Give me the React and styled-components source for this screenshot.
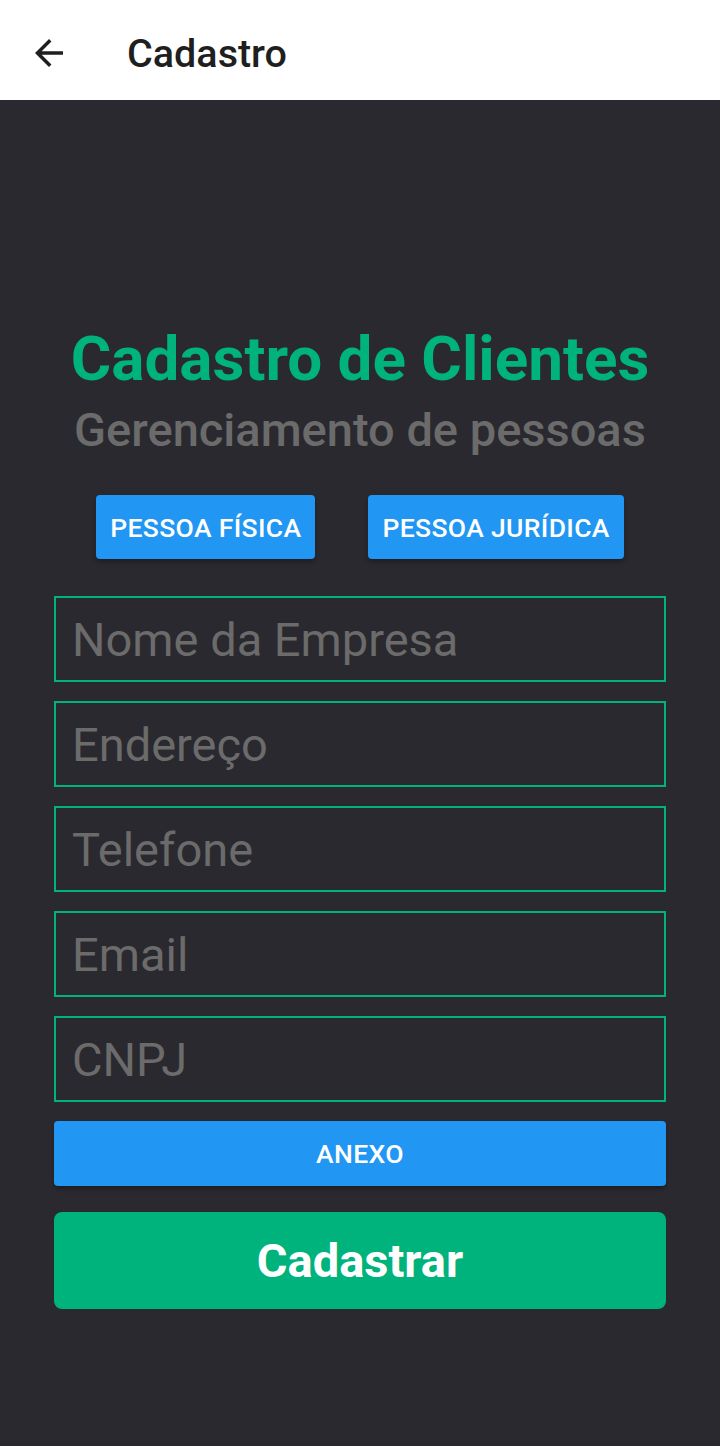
import styled, { createGlobalStyle } from "styled-components";

const GlobalStyle = createGlobalStyle`
    html, body {
        margin: 0;
        padding: 0;
        background-color: #2a292f;
        font-family: Roboto, "Noto Sans", sans-serif;
    }
    * {
        box-sizing: border-box;
    }
`

const fields = ["Nome da Empresa", "Endereço", "Telefone", "Email", "CNPJ"];

const BackIcon = () => (
    <svg width="42" height="42" viewBox="0 0 24 24">
        <path fill="#1f1f1f" d="M20 11H7.83l5.59-5.59L12 4l-8 8 8 8 1.41-1.41L7.83 13H20v-2z" />
    </svg>
);

const App = () => {
    return (
        <Page>
            <GlobalStyle />
            <Header>
                <BackButton aria-label="Voltar"><BackIcon /></BackButton>
                <HeaderTitle>Cadastro</HeaderTitle>
            </Header>
            <Content>
                <Title>Cadastro de Clientes</Title>
                <Subtitle>Gerenciamento de pessoas</Subtitle>
                <TypeRow>
                    <BlueButton>Pessoa Física</BlueButton>
                    <BlueButton>Pessoa Jurídica</BlueButton>
                </TypeRow>
                <Form>
                    {fields.map((field) =>
                        <Field key={field} type="text" placeholder={field} />
                    )}
                    <BlueButton $wide>Anexo</BlueButton>
                    <SubmitButton>Cadastrar</SubmitButton>
                </Form>
            </Content>
        </Page>
    );
}

export default App;

const Page = styled.div`
    min-height: 1446px;
    display: flex;
    flex-direction: column;
    background-color: #2a292f;
`

const Header = styled.header`
    height: 100px;
    background-color: #ffffff;
    display: flex;
    align-items: center;
    padding: 6px 0 0 28px;
`

const BackButton = styled.button`
    width: 42px;
    height: 42px;
    padding: 0;
    border: none;
    background: none;
    display: flex;
    align-items: center;
    justify-content: center;
`

const HeaderTitle = styled.h1`
    margin: 0 0 0 57px;
    font-size: 39.5px;
    font-weight: 500;
    color: #1f1f1f;
`

const Content = styled.main`
    display: flex;
    flex-direction: column;
    align-items: center;
    padding: 223px 54px 0;
`

const Title = styled.div`
    font-size: 62px;
    line-height: 72px;
    font-weight: 700;
    color: #00b27b;
`

const Subtitle = styled.div`
    margin-top: 7px;
    font-size: 47px;
    line-height: 56px;
    font-weight: 500;
    color: #6b6b6b;
`

const TypeRow = styled.div`
    display: flex;
    gap: 53px;
    margin-top: 37px;
`

const BlueButton = styled.button`
    height: ${props => props.$wide ? '65px' : '64px'};
    width: ${props => props.$wide ? '100%' : 'auto'};
    padding: 0 14px;
    border: none;
    border-radius: 4px;
    background-color: #2196f3;
    color: #ffffff;
    font-family: Roboto, sans-serif;
    font-size: 26.5px;
    font-weight: 500;
    letter-spacing: 0.35px;
    text-transform: uppercase;
    box-shadow: 0 3px 4px rgba(0, 0, 0, 0.3);
`

const Form = styled.div`
    width: 100%;
    display: flex;
    flex-direction: column;
    gap: 19px;
    margin-top: 37px;
`

const Field = styled.input`
    height: 86px;
    width: 100%;
    padding: 0 16px;
    border: 2px solid #00b27b;
    background: transparent;
    color: #e0e0e0;
    font-family: Roboto, sans-serif;
    font-size: 47px;
    outline: none;

    &::placeholder {
        color: #6b6b6b;
    }
`

const SubmitButton = styled.button`
    height: 97px;
    margin-top: 7px;
    border: none;
    border-radius: 8px;
    background-color: #00b27b;
    color: #ffffff;
    font-family: Roboto, sans-serif;
    font-size: 47px;
    font-weight: 700;
`
